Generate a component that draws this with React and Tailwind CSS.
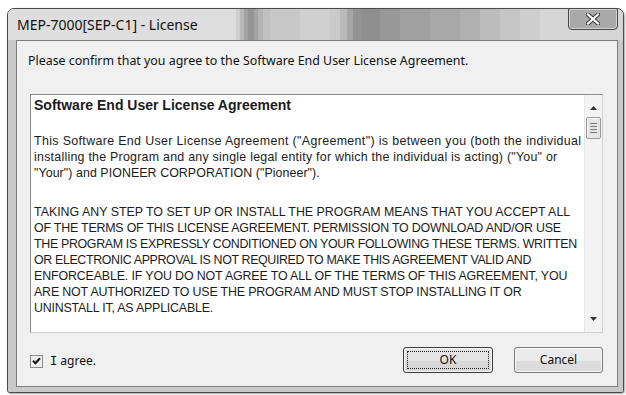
export default function App() {
  const ui = { fontFamily: '"Noto Sans", "Open Sans", sans-serif' };
  const arial = { fontFamily: '"Liberation Sans", Arial, sans-serif' };
  return (
    <div className="w-[626px] h-[395px] bg-white pl-[7px] pt-[8px] overflow-hidden" style={ui}>
      <div className="w-[617px] h-[385px] border border-[#4a4a4a] rounded-t-[7px] rounded-b-[3px] flex flex-col overflow-hidden bg-[#c9c9c9] shadow-[1px_1px_2px_rgba(0,0,0,0.35)]">
        {/* title bar */}
        <div className="h-[31px] shrink-0 flex items-start bg-[#d6d6d6]">
          <div className="w-[228px] h-[31px] shrink-0 pl-[9px] bg-[#dedede]">
            <div className="mt-[7px] text-[14px] leading-[18px] text-[#111] whitespace-nowrap">MEP-7000[SEP-C1] - License</div>
          </div>
          <div className="w-[4px] h-[31px] shrink-0 bg-[#cfcfcf]" />
          <div className="w-[4px] h-[31px] shrink-0 bg-[#b8b8b8]" />
          <div className="w-[4px] h-[31px] shrink-0 bg-[#a2a2a2]" />
          <div className="w-[6px] h-[31px] shrink-0 bg-[#959595]" />
          <div className="w-[4px] h-[31px] shrink-0 bg-[#a4a4a4]" />
          <div className="w-[5px] h-[31px] shrink-0 bg-[#b4b4b4]" />
          <div className="w-[7px] h-[31px] shrink-0 bg-[#c0c0c0]" />
          <div className="w-[30px] h-[31px] shrink-0 bg-[#c8c8c8]" />
          <div className="w-[30px] h-[31px] shrink-0 bg-[#d0d0d0]" />
          <div className="w-[10px] h-[31px] shrink-0 bg-[#cacaca]" />
          <div className="w-[7px] h-[31px] shrink-0 bg-[#bababa]" />
          <div className="w-[6px] h-[31px] shrink-0 bg-[#a6a6a6]" />
          <div className="w-[9px] h-[31px] shrink-0 bg-[#939393]" />
          <div className="w-[18px] h-[31px] shrink-0 bg-[#8e8e8e]" />
          <div className="w-[20px] h-[31px] shrink-0 bg-[#989898]" />
          <div className="w-[30px] h-[31px] shrink-0 bg-[#a0a0a0]" />
          <div className="w-[30px] h-[31px] shrink-0 bg-[#a8a8a8]" />
          <div className="w-[20px] h-[31px] shrink-0 bg-[#b0b0b0]" />
          <div className="w-[20px] h-[31px] shrink-0 bg-[#bcbcbc]" />
          <div className="w-[20px] h-[31px] shrink-0 bg-[#c6c6c6]" />
          <div className="w-[20px] h-[31px] shrink-0 bg-[#cecece]" />
          <div className="flex-1" />
          <div className="w-[50px] h-[22px] -mt-[1px] mr-[5px] rounded-b-[4px] rounded-t-[2px] border border-[#4a4a4a] bg-[#a9a9a9] flex items-center justify-center shadow-[inset_0_0_0_1px_rgba(255,255,255,0.45)]">
            <svg width="14" height="12" viewBox="0 0 14 12">
              <path d="M2 1.5 L12 10.5 M12 1.5 L2 10.5" stroke="#3a3a3a" strokeWidth="4.2" strokeLinecap="square" />
              <path d="M2 1.5 L12 10.5 M12 1.5 L2 10.5" stroke="#ffffff" strokeWidth="2.2" strokeLinecap="square" />
            </svg>
          </div>
        </div>
        {/* frame body */}
        <div className="flex-1 flex flex-col pl-[8px] pr-[5px] pb-[5px] bg-[#c9c9c9]">
          <div className="flex-1 flex flex-col border border-[#7e7e7e] bg-[#f0f0f0]">
            <div className="pl-[11px] pt-[12px] text-[12.4px] leading-[16px] text-[#111]">
              Please confirm that you agree to the Software End User License Agreement.
            </div>
            {/* textbox */}
            <div className="ml-[13px] mt-[25px] w-[573px] h-[239px] border border-t-[#8c8c8c] border-l-[#8c8c8c] border-r-[#d0d0d0] border-b-[#d0d0d0] bg-white flex">
              <div className="flex-1 pl-[3px] pt-[2px] text-[12.4px] leading-[16px] text-[#1c1c1c] whitespace-nowrap overflow-hidden" style={arial}>
                <div className="font-bold text-[14px]">Software End User License Agreement</div>
                <div className="mt-[20px]">
                  <div className="tracking-[0.36px]">This Software End User License Agreement ("Agreement") is between you (both the individual</div>
                  <div className="tracking-[0.25px]">installing the Program and any single legal entity for which the individual is acting) ("You" or</div>
                  <div className="tracking-[0.07px]">"Your") and PIONEER CORPORATION ("Pioneer").</div>
                </div>
                <div className="mt-[23px]">
                  <div className="tracking-[0px]">TAKING ANY STEP TO SET UP OR INSTALL THE PROGRAM MEANS THAT YOU ACCEPT ALL</div>
                  <div className="tracking-[-0.2px]">OF THE TERMS OF THIS LICENSE AGREEMENT. PERMISSION TO DOWNLOAD AND/OR USE</div>
                  <div className="tracking-[-0.32px]">THE PROGRAM IS EXPRESSLY CONDITIONED ON YOUR FOLLOWING THESE TERMS. WRITTEN</div>
                  <div className="tracking-[-0.35px]">OR ELECTRONIC APPROVAL IS NOT REQUIRED TO MAKE THIS AGREEMENT VALID AND</div>
                  <div className="tracking-[-0.13px]">ENFORCEABLE. IF YOU DO NOT AGREE TO ALL OF THE TERMS OF THIS AGREEMENT, YOU</div>
                  <div className="tracking-[-0.15px]">ARE NOT AUTHORIZED TO USE THE PROGRAM AND MUST STOP INSTALLING IT OR</div>
                  <div className="tracking-[-0.2px]">UNINSTALL IT, AS APPLICABLE.</div>
                </div>
              </div>
              {/* scrollbar */}
              <div className="w-[18px] flex flex-col items-center bg-[#f3f3f3] border-l border-[#e6e6e6]">
                <div className="h-[17px] w-full flex items-center justify-center mt-[4px]">
                  <svg width="7" height="4" viewBox="0 0 7 4"><path d="M0 4 L3.5 0 L7 4 Z" fill="#333" /></svg>
                </div>
                <div className="mt-[1px] w-[15px] h-[22px] rounded-[2px] border border-[#9a9a9a] bg-[#e6e6e6] flex flex-col items-center justify-center gap-[2px] shadow-[inset_1px_1px_0_#f8f8f8]">
                  <div className="w-[7px] h-[1px] bg-[#777]" />
                  <div className="w-[7px] h-[1px] bg-[#777]" />
                  <div className="w-[7px] h-[1px] bg-[#777]" />
                  <div className="w-[7px] h-[1px] bg-[#777]" />
                </div>
                <div className="flex-1" />
                <div className="h-[17px] w-full flex items-center justify-center mb-[5px]">
                  <svg width="7" height="4" viewBox="0 0 7 4"><path d="M0 0 L3.5 4 L7 0 Z" fill="#333" /></svg>
                </div>
              </div>
            </div>
            {/* bottom row */}
            <div className="mt-[14px] flex items-start pl-[13px] pr-[14px]">
              <div className="flex items-center mt-[6px]">
                <div className="w-[13px] h-[13px] border border-[#8a8a8a] bg-[#ececec] flex items-center justify-center">
                  <svg width="9" height="8" viewBox="0 0 9 8">
                    <path d="M1 3.8 L3.4 6.2 L8 1.2" stroke="#111" strokeWidth="2" fill="none" />
                  </svg>
                </div>
                <span className="ml-[7px] text-[12px] leading-[16px] text-[#111]">
                  <span style={{ fontFamily: '"DejaVu Sans Mono", monospace' }}>I</span> agree.
                </span>
              </div>
              <div className="flex-1" />
              <div className="w-[90px] h-[26px] rounded-[3px] border border-[#3e3e3e] bg-[#e4e4e4] p-[3px] shadow-[inset_0_0_0_1px_#f4f4f4,inset_0_-11px_0_#d8d8d8]">
                <div className="w-full h-full border border-dotted border-[#222] flex items-center justify-center text-[12px] text-[#111]">OK</div>
              </div>
              <div className="ml-[21px] w-[89px] h-[26px] rounded-[3px] border border-[#7a7a7a] bg-[#ebebeb] flex items-center justify-center text-[12px] text-[#111] shadow-[inset_0_0_0_1px_#f8f8f8,inset_0_-11px_0_#dcdcdc]">Cancel</div>
            </div>
          </div>
        </div>
      </div>
    </div>
  );
}
